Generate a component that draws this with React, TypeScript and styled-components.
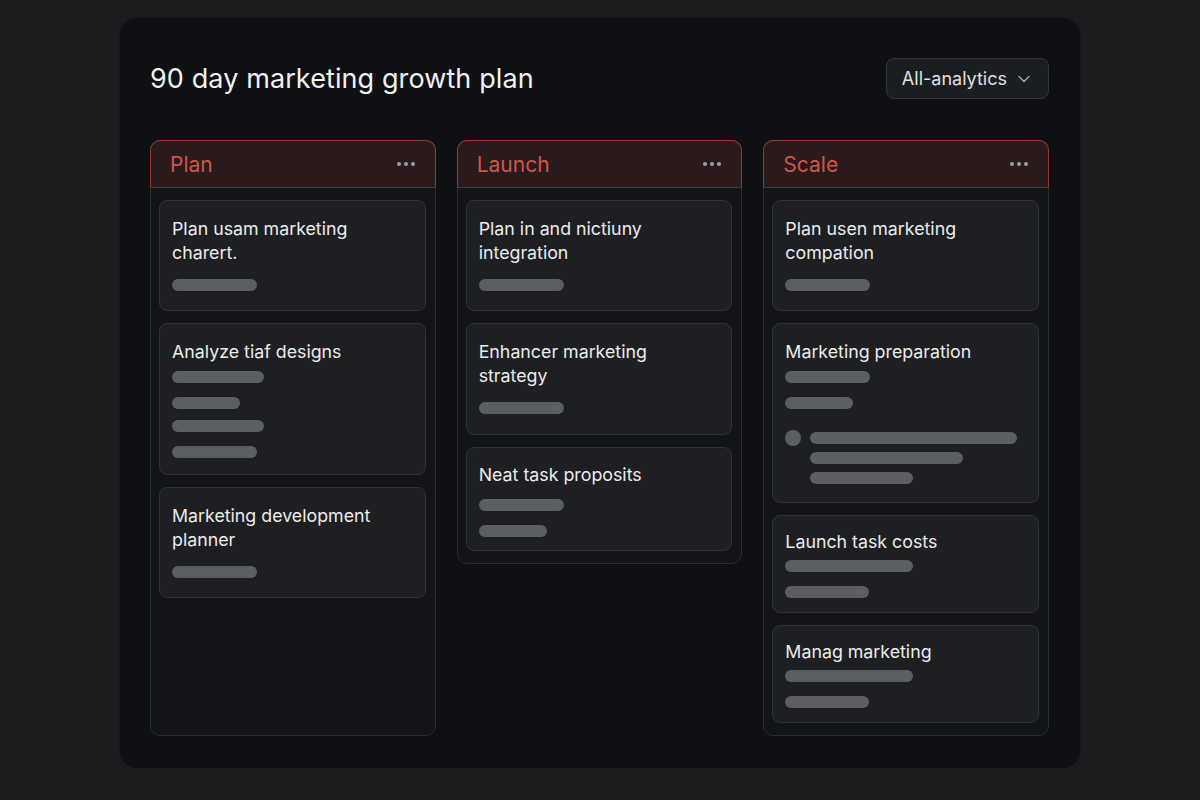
import styled, { createGlobalStyle } from "styled-components";
import { ChevronDown } from "lucide-react";

const GlobalStyle = createGlobalStyle`
  html, body {
    margin: 0;
    padding: 0;
    background: #1a1c1e;
  }
  body {
    font-family: Inter, "Noto Sans", "Liberation Sans", sans-serif;
    -webkit-font-smoothing: antialiased;
  }
`;

const Page = styled.div`
  width: 1200px;
  height: 800px;
  padding-top: 18px;
  box-sizing: border-box;
  display: flex;
  justify-content: center;
  align-items: flex-start;
`;

const Panel = styled.div`
  width: 960px;
  height: 750px;
  box-sizing: border-box;
  padding: 40px 31px 32px 30px;
  background: #0e1014;
  border-radius: 18px;
  box-shadow: 0 0 0 1px #16181b;
  display: flex;
  flex-direction: column;
  gap: 41px;
`;

const TopBar = styled.div`
  display: flex;
  align-items: center;
  justify-content: space-between;
  height: 42px;
`;

const Title = styled.h1`
  margin: 0;
  font-size: 27px;
  font-weight: 400;
  color: #f2f2f2;
  letter-spacing: 0.1px;
`;

const Select = styled.button`
  display: flex;
  align-items: center;
  gap: 7px;
  height: 41px;
  padding: 0 14px 0 15px;
  background: #1b1e21;
  border: 1px solid #32363a;
  border-radius: 8px;
  color: #e0e0e0;
  font-family: inherit;
  font-size: 18px;
  svg {
    color: #a8abae;
  }
`;

const Board = styled.div`
  display: flex;
  align-items: flex-start;
  gap: 21px;
  flex: 1;
`;

const Column = styled.div<{ $fill?: boolean }>`
  width: 287px;
  align-self: ${(p) => (p.$fill ? "stretch" : "flex-start")};
  box-sizing: border-box;
  border: 1px solid #2a2e32;
  border-radius: 10px;
  background: #121417;
  display: flex;
  flex-direction: column;
`;

const ColumnHead = styled.div`
  height: 48px;
  box-sizing: border-box;
  margin: -1px -1px 0;
  padding: 0 20px 0 19px;
  display: flex;
  align-items: center;
  justify-content: space-between;
  background: #2b1a1b;
  border: 1px solid #93392f;
  border-bottom: 1px solid #3a3d41;
  border-radius: 10px 10px 0 0;
`;

const ColumnName = styled.span`
  font-size: 21px;
  color: #cf5748;
`;

const Dots = styled.span`
  display: flex;
  gap: 3px;
  span {
    width: 4px;
    height: 4px;
    border-radius: 50%;
    background: #9c9fa3;
  }
`;

const Cards = styled.div`
  display: flex;
  flex-direction: column;
  gap: 12px;
  padding: 12px 9px 12px 8px;
`;

const Card = styled.div<{ $h: number; $pt: number }>`
  height: ${(p) => p.$h}px;
  box-sizing: border-box;
  padding: ${(p) => p.$pt}px 12px 0;
  background: #1d1f22;
  border: 1px solid #2f3337;
  border-radius: 8px;
`;

const CardTitle = styled.div`
  max-width: 200px;
  font-size: 17.8px;
  line-height: 24px;
  color: #ececec;
`;

const Bar = styled.div<{ $w: number; $mt: number }>`
  width: ${(p) => p.$w}px;
  height: 12px;
  margin-top: ${(p) => p.$mt}px;
  border-radius: 6px;
  background: #5b5e62;
`;

const Comment = styled.div`
  display: flex;
  gap: 9px;
  margin-top: 21px;
`;

const Avatar = styled.div`
  width: 16px;
  height: 16px;
  border-radius: 50%;
  background: #5b5e62;
  flex-shrink: 0;
`;

const Lines = styled.div`
  display: flex;
  flex-direction: column;
  gap: 8px;
  margin-top: 2px;
`;

type Task = {
  title: string;
  h: number;
  pt: number;
  bars: [number, number][];
  comment?: number[];
};

type Col = { name: string; fill?: boolean; tasks: Task[] };

const columns: Col[] = [
  {
    name: "Plan",
    fill: true,
    tasks: [
      { title: "Plan usam marketing charert.", h: 111, pt: 16, bars: [[85, 14]] },
      {
        title: "Analyze tiaf designs",
        h: 152,
        pt: 16,
        bars: [
          [92, 7],
          [68, 14],
          [92, 11],
          [85, 14],
        ],
      },
      { title: "Marketing development planner", h: 111, pt: 16, bars: [[85, 14]] },
    ],
  },
  {
    name: "Launch",
    tasks: [
      { title: "Plan in and nictiuny integration", h: 111, pt: 16, bars: [[85, 14]] },
      { title: "Enhancer marketing strategy", h: 112, pt: 16, bars: [[85, 14]] },
      {
        title: "Neat task proposits",
        h: 104,
        pt: 15,
        bars: [
          [85, 12],
          [68, 14],
        ],
      },
    ],
  },
  {
    name: "Scale",
    fill: true,
    tasks: [
      { title: "Plan usen marketing compation", h: 111, pt: 16, bars: [[85, 14]] },
      {
        title: "Marketing preparation",
        h: 180,
        pt: 16,
        bars: [
          [85, 7],
          [68, 14],
        ],
        comment: [207, 153, 103],
      },
      {
        title: "Launch task costs",
        h: 98,
        pt: 14,
        bars: [
          [128, 6],
          [84, 14],
        ],
      },
      {
        title: "Manag marketing",
        h: 98,
        pt: 14,
        bars: [
          [128, 6],
          [84, 14],
        ],
      },
    ],
  },
];

export default function App() {
  return (
    <>
      <GlobalStyle />
      <Page>
        <Panel>
          <TopBar>
            <Title>90 day marketing growth plan</Title>
            <Select>
              All-analytics
              <ChevronDown size={20} strokeWidth={1.5} />
            </Select>
          </TopBar>
          <Board>
            {columns.map((col) => (
              <Column key={col.name} $fill={col.fill}>
                <ColumnHead>
                  <ColumnName>{col.name}</ColumnName>
                  <Dots>
                    <span />
                    <span />
                    <span />
                  </Dots>
                </ColumnHead>
                <Cards>
                  {col.tasks.map((t) => (
                    <Card key={t.title} $h={t.h} $pt={t.pt}>
                      <CardTitle>{t.title}</CardTitle>
                      {t.bars.map(([w, mt], i) => (
                        <Bar key={i} $w={w} $mt={mt} />
                      ))}
                      {t.comment && (
                        <Comment>
                          <Avatar />
                          <Lines>
                            {t.comment.map((w, i) => (
                              <Bar key={i} $w={w} $mt={0} />
                            ))}
                          </Lines>
                        </Comment>
                      )}
                    </Card>
                  ))}
                </Cards>
              </Column>
            ))}
          </Board>
        </Panel>
      </Page>
    </>
  );
}
